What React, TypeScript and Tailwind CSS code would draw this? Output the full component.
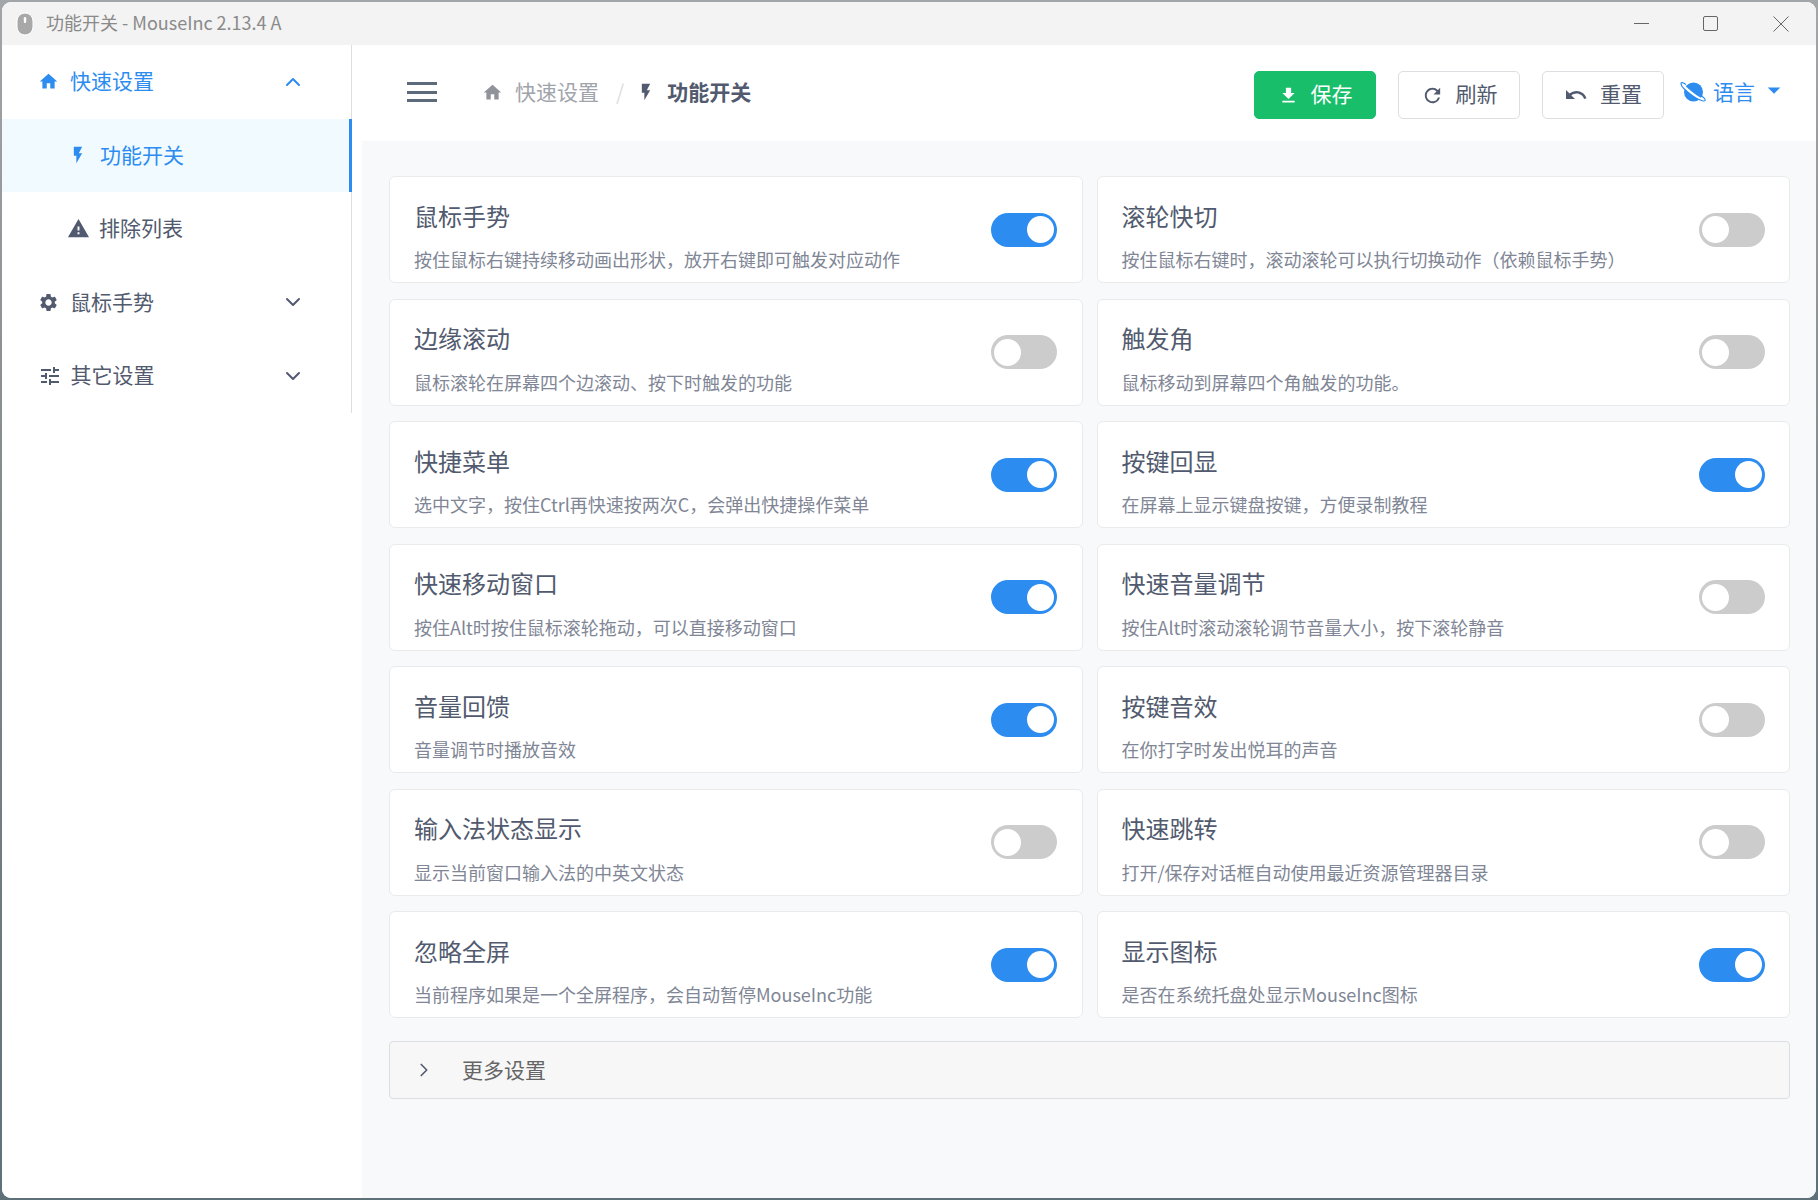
import { ChevronDown, ChevronRight, ChevronUp } from "lucide-react";
import {
  MdArrowDropDown,
  MdFileDownload,
  MdFlashOn,
  MdHome,
  MdRefresh,
  MdSettings,
  MdTune,
  MdUndo,
  MdWarning,
} from "react-icons/md";

const features = [
  { title: "鼠标手势", desc: "按住鼠标右键持续移动画出形状，放开右键即可触发对应动作", on: true },
  { title: "滚轮快切", desc: "按住鼠标右键时，滚动滚轮可以执行切换动作（依赖鼠标手势）", on: false },
  { title: "边缘滚动", desc: "鼠标滚轮在屏幕四个边滚动、按下时触发的功能", on: false },
  { title: "触发角", desc: "鼠标移动到屏幕四个角触发的功能。", on: false },
  { title: "快捷菜单", desc: "选中文字，按住Ctrl再快速按两次C，会弹出快捷操作菜单", on: true },
  { title: "按键回显", desc: "在屏幕上显示键盘按键，方便录制教程", on: true },
  { title: "快速移动窗口", desc: "按住Alt时按住鼠标滚轮拖动，可以直接移动窗口", on: true },
  { title: "快速音量调节", desc: "按住Alt时滚动滚轮调节音量大小，按下滚轮静音", on: false },
  { title: "音量回馈", desc: "音量调节时播放音效", on: true },
  { title: "按键音效", desc: "在你打字时发出悦耳的声音", on: false },
  { title: "输入法状态显示", desc: "显示当前窗口输入法的中英文状态", on: false },
  { title: "快速跳转", desc: "打开/保存对话框自动使用最近资源管理器目录", on: false },
  { title: "忽略全屏", desc: "当前程序如果是一个全屏程序，会自动暂停MouseInc功能", on: true },
  { title: "显示图标", desc: "是否在系统托盘处显示MouseInc图标", on: true },
];

function MouseIcon() {
  return (
    <svg width="18" height="24" viewBox="0 0 18 24" className="shrink-0">
      <rect x="1" y="1" width="16" height="22" rx="8" fill="#a8a8a8" stroke="#fff" strokeWidth="1" />
      <rect x="7.8" y="5" width="2.4" height="6" rx="1.2" fill="#fff" />
    </svg>
  );
}

function PlanetIcon() {
  return (
    <svg width="26" height="22" viewBox="0 0 26 22" className="shrink-0">
      <circle cx="13.5" cy="11" r="9.5" fill="#2d8cf0" />
      <path d="M1.5 2.5C5 7 17 17.500 24.500 19.500" fill="none" stroke="#fff" strokeWidth="2.6" />
      <path
        d="M6 3.500C3 1.500 1 1 1 2.500 1 5 6.500 10.500 12 14.500S24 21 25 19.500 23 16 20.500 14"
        fill="none"
        stroke="#2d8cf0"
        strokeWidth="1.2"
      />
    </svg>
  );
}

function Toggle({ on }: { on: boolean }) {
  return (
    <div
      className={`flex h-[34px] w-[66px] shrink-0 items-center rounded-full px-[3px] ${
        on ? "justify-end bg-[#2d8cf0]" : "justify-start bg-[#cccccc]"
      }`}
    >
      <div className="h-[27px] w-[27px] rounded-full bg-white" />
    </div>
  );
}

function FeatureCard({ title, desc, on }: { title: string; desc: string; on: boolean }) {
  return (
    <div className="flex items-center justify-between rounded-[6px] border border-[#e8eaec] bg-white pl-[24px] pr-[24.500px]">
      <div className="min-w-0 pt-[10.500px]">
        <div className="text-[24px] leading-[36px] text-[#515a6e]">{title}</div>
        <div className="mt-[12.500px] text-[18px] leading-[26px] text-[#808695]">{desc}</div>
      </div>
      <Toggle on={on} />
    </div>
  );
}

function ToolButton({ label, icon, primary }: { label: string; icon: React.ReactNode; primary?: boolean }) {
  return (
    <button
      className={`flex h-[48px] w-[122px] items-center justify-center gap-[12px] rounded-[5px] border text-[21px] ${
        primary
          ? "border-[#19be6b] bg-[#19be6b] text-white"
          : "border-[#dcdee2] bg-white text-[#515a6e]"
      }`}
    >
      {icon}
      <span className="-translate-y-[1px]">{label}</span>
    </button>
  );
}

function Sidebar() {
  return (
    <aside className="w-[350px] shrink-0 bg-white">
      <nav className="border-r border-[#dcdee2] text-[21px] text-[#515a6e]">
        <div className="flex h-[73.5px] items-center pl-[36px] pr-[46px] text-[#2d8cf0]">
          <MdHome size={21} className="mr-[11px] shrink-0" />
          <span className="flex-1 -translate-y-[1px]">快速设置</span>
          <ChevronUp size={24} />
        </div>
        <div className="-mr-[1px] flex h-[73.5px] items-center border-r-[3px] border-[#2d8cf0] bg-[#f0faff] pl-[66px] text-[#2d8cf0]">
          <MdFlashOn size={20} className="mr-[12px] shrink-0" />
          <span className="-translate-y-[1px]">功能开关</span>
        </div>
        <div className="flex h-[73.5px] items-center pl-[65px]">
          <MdWarning size={23} className="mr-[9px] shrink-0" />
          <span className="-translate-y-[1px]">排除列表</span>
        </div>
        <div className="flex h-[73.5px] items-center pl-[36px] pr-[46px]">
          <MdSettings size={21} className="mr-[11px] shrink-0" />
          <span className="flex-1 -translate-y-[1px]">鼠标手势</span>
          <ChevronDown size={24} />
        </div>
        <div className="flex h-[73.5px] items-center pl-[36px] pr-[46px]">
          <MdTune size={24} className="mr-[8.500px] shrink-0" />
          <span className="flex-1 -translate-y-[1px]">其它设置</span>
          <ChevronDown size={24} />
        </div>
      </nav>
    </aside>
  );
}

function Header() {
  return (
    <header className="flex h-[96px] shrink-0 items-center bg-white pl-[55px] pr-[35px]">
      <div className="-mt-[2px] flex h-[20px] w-[30px] flex-col justify-between">
        <div className="h-[3px] bg-[#5c6b7a]" />
        <div className="h-[3px] bg-[#5c6b7a]" />
        <div className="h-[3px] bg-[#5c6b7a]" />
      </div>
      <div className="-mt-[2px] ml-[45px] flex items-center text-[21px]">
        <MdHome size={21} className="text-[#909399]" />
        <span className="ml-[12px] text-[#a0a4ab]">快速设置</span>
        <span className="ml-[17px] mr-[12px] text-[#dcdee2]">/</span>
        <MdFlashOn size={20} className="text-[#515a6e]" />
        <span className="ml-[11px] font-bold text-[#515a6e]">功能开关</span>
      </div>
      <div className="ml-auto mt-[4px] flex items-center gap-[22px]">
        <ToolButton primary label="保存" icon={<MdFileDownload size={21} />} />
        <ToolButton label="刷新" icon={<MdRefresh size={23} />} />
        <ToolButton label="重置" icon={<MdUndo size={24} />} />
      </div>
      <div className="-mt-[2px] ml-[16px] flex items-center text-[21px] text-[#2d8cf0]">
        <PlanetIcon />
        <span className="ml-[7px]">语言</span>
        <MdArrowDropDown size={30} className="ml-[4px] -mr-[8px] -translate-y-[2px]" />
      </div>
    </header>
  );
}

export default function App() {
  return (
    <div
      lang="zh-CN"
      className="h-[1200px] w-[1818px] bg-gradient-to-b from-[#a3a6a8] via-[#7f8488] to-[#5f7178] p-[2px] font-['Noto_Sans_CJK_SC','Noto_Sans',sans-serif]"
    >
      <div className="flex h-full flex-col overflow-hidden rounded-[9px] bg-white">
        <div className="flex h-[43px] shrink-0 items-center bg-[#f3f3f3] pl-[14px]">
          <MouseIcon />
          <span className="ml-[12px] -translate-y-[1px] text-[18px] text-[#8a8a8a]">功能开关 - MouseInc 2.13.4 A</span>
          <div className="ml-auto flex items-center text-[#666666]">
            <div className="h-[1px] w-[15px] bg-[#666666]" />
            <div className="ml-[54px] h-[15px] w-[15px] rounded-[2px] border border-[#666666]" />
            <svg width="16" height="16" viewBox="0 0 16 16" className="ml-[55px] mr-[27px]">
              <path d="M.5.5l15 15M15.500.5l-15 15" stroke="#666666" strokeWidth="1" fill="none" />
            </svg>
          </div>
        </div>
        <div className="flex min-h-0 flex-1">
          <Sidebar />
          <main className="flex min-w-0 flex-1 flex-col">
            <Header />
            <section className="ml-[10px] flex-1 bg-[#f8f9fb] pl-[27px] pr-[26px] pt-[35px]">
              <div className="grid grid-cols-2 auto-rows-[107px] gap-x-[14px] gap-y-[15.500px]">
                {features.map((f) => (
                  <FeatureCard key={f.title} {...f} />
                ))}
              </div>
              <div className="mt-[23px] flex h-[58px] items-center rounded-[4px] border border-[#dcdee2] bg-[#f7f7f7] pl-[23px] text-[21px] text-[#666666]">
                <ChevronRight size={22} strokeWidth={1.8} className="text-[#515a6e]" />
                <span className="ml-[27px]">更多设置</span>
              </div>
            </section>
          </main>
        </div>
      </div>
    </div>
  );
}
